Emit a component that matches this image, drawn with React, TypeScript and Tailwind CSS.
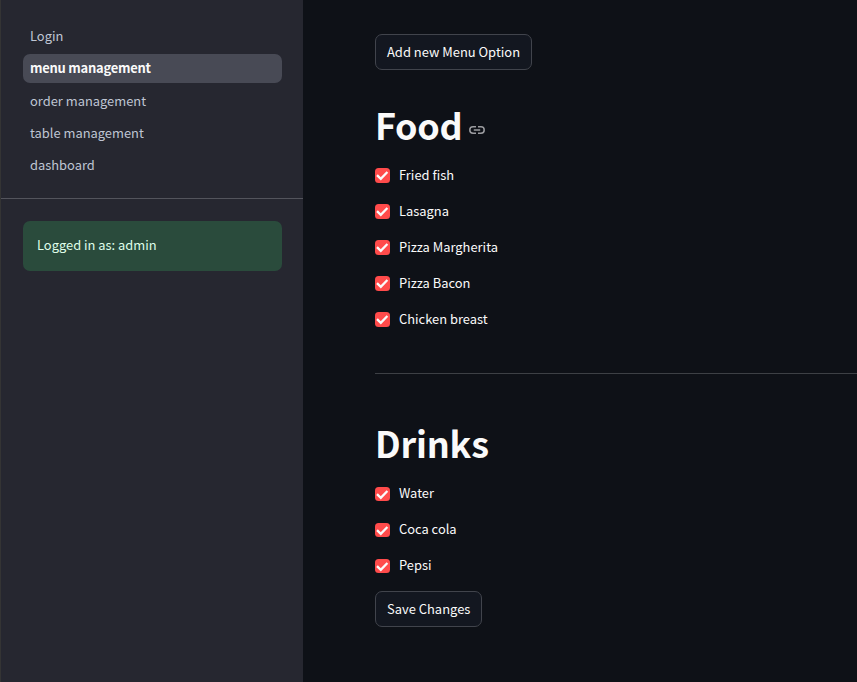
const pages = ['Login', 'menu management', 'order management', 'table management', 'dashboard'];
const food = ['Fried fish', 'Lasagna', 'Pizza Margherita', 'Pizza Bacon', 'Chicken breast'];
const drinks = ['Water', 'Coca cola', 'Pepsi'];

function Option({ label, compact = false }: { label: string; compact?: boolean }) {
  return (
    <label className="flex h-[15px] items-end gap-[9px]">
      <span
        className={
          compact
            ? 'flex h-[14px] w-[15px] shrink-0 items-center justify-center overflow-hidden rounded-[3.5px] bg-[#ff4b4b]'
            : 'flex h-[15px] w-[15px] shrink-0 items-center justify-center overflow-hidden rounded-[3.5px] bg-[#ff4b4b]'
        }
      >
        <svg className="shrink-0" width="15" height="15" viewBox="0 0 15 15" fill="none" stroke="#fafafa" strokeWidth="2.3">
          <path d="M2 7.2 5.8 10.8 12.4 4" />
        </svg>
      </span>
      <span className="pb-[1px] text-[12.9px] leading-[15px]">{label}</span>
    </label>
  );
}

function Action({ label }: { label: string }) {
  return (
    <button className="flex h-9 items-center self-start rounded-[7px] border border-[#41444c] bg-[#131720] px-[11px] text-[12.95px] leading-none">
      {label}
    </button>
  );
}

export default function App() {
  return (
    <div className="flex h-[682px] w-[857px] overflow-hidden bg-[#0e1117] font-['Noto_Sans_CJK_SC','Noto_Sans',sans-serif] text-[#fafafa]">
      <aside className="w-[303px] shrink-0 border-l border-[#343434] bg-[#262730] pt-[22px]">
        <nav className="flex flex-col gap-[3.25px] pr-[21px] pl-[22px]">
          {pages.map((page, i) => (
            <a
              key={page}
              className={
                i === 1
                  ? 'flex h-[29px] items-center rounded-[7px] bg-[#484a55] px-[7px] text-[12.95px] leading-none font-bold tracking-[-0.23px] text-[#fafafa]'
                  : 'flex h-[29px] items-center rounded-[7px] px-[7px] text-[12.9px] leading-none text-[#bfc5d3]'
              }
            >
              {page}
            </a>
          ))}
        </nav>
        <hr className="mt-[18px] border-t border-[#53545c]" />
        <div className="mt-[22px] mr-[21px] ml-[22px] flex h-[50px] items-center rounded-[7px] bg-[#2a4b3c] px-[14px] pb-[2px] text-[12.9px] leading-none text-[#dffde9]">
          Logged in as: admin
        </div>
      </aside>
      <main className="flex flex-1 flex-col pt-[34px] pl-[72px]">
        <Action label="Add new Menu Option" />
        <h1 className="mt-[36px] flex h-[44px] items-center pb-[8px] text-[36px] leading-none font-bold tracking-[-0.3px]">
          Food
          <svg className="mt-[11px] ml-[7px]" width="16" height="8" viewBox="0 0 16 8" fill="none" stroke="#9b9ca0" strokeWidth="1.5">
            <path d="M7 .8H4a3.2 3.2 0 0 0 0 6.4h3M9 .8h3a3.2 3.2 0 0 1 0 6.4H9M4.8 4h6.4" />
          </svg>
        </h1>
        <div className="mt-[18px] flex flex-col gap-[21px]">
          {food.map((item) => <Option key={item} label={item} />)}
        </div>
        <hr className="mt-[46px] border-t border-[#3d4045]" />
        <h1 className="mt-[50px] flex h-[44px] items-center pb-[8px] text-[36px] leading-none font-bold tracking-[-0.2px]">
          Drinks
        </h1>
        <div className="mt-[18px] mb-[18px] flex flex-col gap-[21px]">
          {drinks.map((item) => <Option key={item} label={item} compact />)}
        </div>
        <Action label="Save Changes" />
      </main>
    </div>
  );
}
